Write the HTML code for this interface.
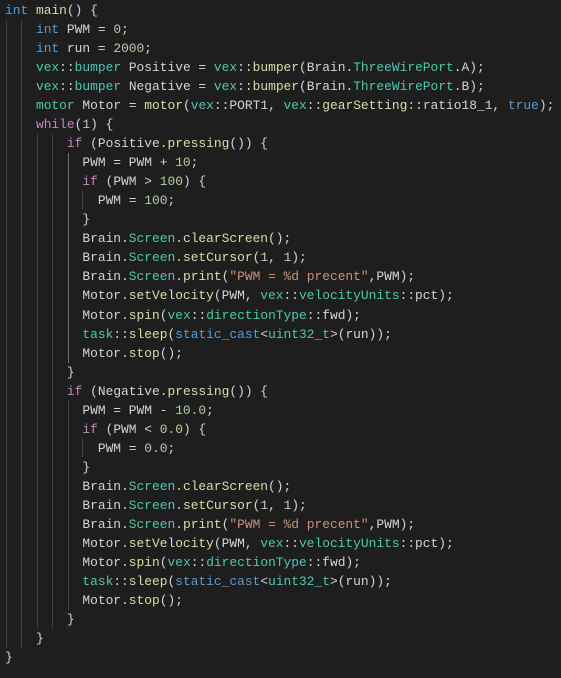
<!DOCTYPE html><html><head><style>
body{margin:0;background:#1e1e1e;width:561px;height:678px;overflow:hidden;position:relative}
pre{margin:0;position:absolute;left:5px;top:1px;font-family:"Liberation Mono",monospace;font-size:12.9px;line-height:19.03px;color:#d4d4d4}
.k{color:#569cd6}.t{color:#4ec9b0}.f{color:#dcdcaa}.n{color:#b5cea8}.c{color:#c586c0}.s{color:#ce9178}
.g{position:absolute;width:1px;background:#404040}
</style></head><body>
<div class="g" style="left:6px;top:20px;height:628px"></div>
<div class="g" style="left:21px;top:20px;height:628px"></div>
<div class="g" style="left:37px;top:134px;height:495px"></div>
<div class="g" style="left:52px;top:134px;height:495px"></div>
<div class="g" style="left:68px;top:153px;height:210px;background:#707070"></div>
<div class="g" style="left:68px;top:400px;height:210px"></div>
<div class="g" style="left:82px;top:191px;height:19px"></div>
<div class="g" style="left:82px;top:438px;height:19px"></div>
<pre><span class="k">int</span> <span class="f">main</span>() {
    <span class="k">int</span> PWM = <span class="n">0</span>;
    <span class="k">int</span> run = <span class="n">2000</span>;
    <span class="t">vex</span>::<span class="t">bumper</span> Positive = <span class="t">vex</span>::<span class="f">bumper</span>(Brain.<span class="t">ThreeWirePort</span>.A);
    <span class="t">vex</span>::<span class="t">bumper</span> Negative = <span class="t">vex</span>::<span class="f">bumper</span>(Brain.<span class="t">ThreeWirePort</span>.B);
    <span class="t">motor</span> Motor = <span class="f">motor</span>(<span class="t">vex</span>::PORT1, <span class="t">vex</span>::<span class="f">gearSetting</span>::ratio18_1, <span class="k">true</span>);
    <span class="c">while</span>(<span class="n">1</span>) {
        <span class="c">if</span> (Positive.<span class="f">pressing</span>()) {
          PWM = PWM + <span class="n">10</span>;
          <span class="c">if</span> (PWM &gt; <span class="n">100</span>) {
            PWM = <span class="n">100</span>;
          }
          Brain.<span class="t">Screen</span>.<span class="f">clearScreen</span>();
          Brain.<span class="t">Screen</span>.<span class="f">setCursor</span>(<span class="n">1</span>, <span class="n">1</span>);
          Brain.<span class="t">Screen</span>.<span class="f">print</span>(<span class="s">"PWM = %d precent"</span>,PWM);
          Motor.<span class="f">setVelocity</span>(PWM, <span class="t">vex</span>::<span class="t">velocityUnits</span>::pct);
          Motor.<span class="f">spin</span>(<span class="t">vex</span>::<span class="t">directionType</span>::fwd);
          <span class="t">task</span>::<span class="f">sleep</span>(<span class="k">static_cast</span>&lt;<span class="t">uint32_t</span>&gt;(run));
          Motor.<span class="f">stop</span>();
        }
        <span class="c">if</span> (Negative.<span class="f">pressing</span>()) {
          PWM = PWM - <span class="n">10.0</span>;
          <span class="c">if</span> (PWM &lt; <span class="n">0.0</span>) {
            PWM = <span class="n">0.0</span>;
          }
          Brain.<span class="t">Screen</span>.<span class="f">clearScreen</span>();
          Brain.<span class="t">Screen</span>.<span class="f">setCursor</span>(<span class="n">1</span>, <span class="n">1</span>);
          Brain.<span class="t">Screen</span>.<span class="f">print</span>(<span class="s">"PWM = %d precent"</span>,PWM);
          Motor.<span class="f">setVelocity</span>(PWM, <span class="t">vex</span>::<span class="t">velocityUnits</span>::pct);
          Motor.<span class="f">spin</span>(<span class="t">vex</span>::<span class="t">directionType</span>::fwd);
          <span class="t">task</span>::<span class="f">sleep</span>(<span class="k">static_cast</span>&lt;<span class="t">uint32_t</span>&gt;(run));
          Motor.<span class="f">stop</span>();
        }
    }
}</pre>
</body></html>
